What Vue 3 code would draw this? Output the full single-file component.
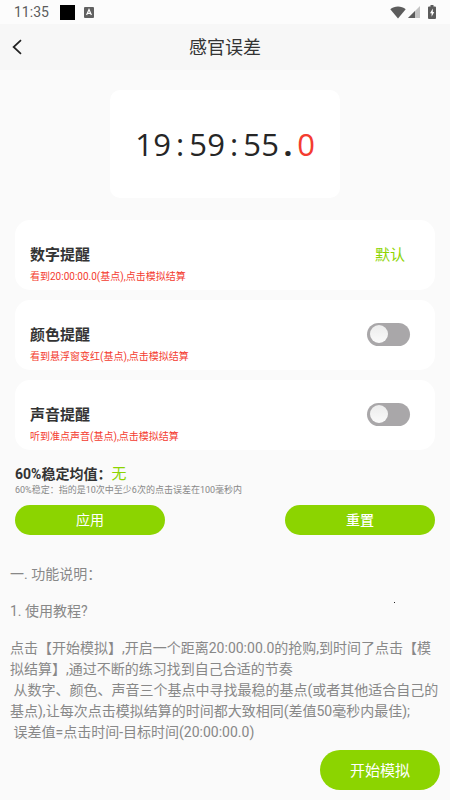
<script setup>
import { ref } from 'vue'

const time = '19:59:55.'
const tenth = '0'
const colorOn = ref(false)
const soundOn = ref(false)
const steps = [
  '点击【开始模拟】,开启一个距离20:00:00.0的抢购,到时间了点击【模拟结算】,通过不断的练习找到自己合适的节奏',
  ' 从数字、颜色、声音三个基点中寻找最稳的基点(或者其他适合自己的基点),让每次点击模拟结算的时间都大致相同(差值50毫秒内最佳);',
  ' 误差值=点击时间-目标时间(20:00:00.0)'
].join('\n')
</script>

<template>
  <div class="screen">
    <div class="status">
      <span class="status-time">11:35</span>
      <span class="block"></span>
      <svg class="ime" viewBox="0 0 10 11" aria-hidden="true">
        <rect width="10" height="11" rx="1" fill="#616161" />
        <path d="M2.6 8 5 2.6 7.4 8M3.5 6.4h3" fill="none" stroke="#fff" stroke-width="1.2" />
      </svg>
      <span class="grow"></span>
      <svg class="wifi" viewBox="0 0 16 13" aria-hidden="true">
        <path d="M8 12.6 0.3 3.2C4.6-.4 11.4-.4 15.7 3.2Z" fill="#5c5c5c" />
      </svg>
      <svg class="signal" viewBox="0 0 12 12" aria-hidden="true">
        <path d="M12 0v12H0Z" fill="#c4c4c4" />
        <path d="M7 5v7H0Z" fill="#5c5c5c" />
      </svg>
      <svg class="battery" viewBox="0 0 8 14" aria-hidden="true">
        <path d="M2.5 0h3v1.5H7a1 1 0 0 1 1 1V13a1 1 0 0 1-1 1H1a1 1 0 0 1-1-1V2.5a1 1 0 0 1 1-1h1.5Z" fill="#5c5c5c" />
        <path d="M4.8 3.5 2 8.2h1.6v3.6L6.2 7H4.8Z" fill="#fff" />
      </svg>
    </div>

    <header class="bar">
      <button class="back" type="button" aria-label="返回">
        <svg viewBox="0 0 10 16" aria-hidden="true">
          <path d="M9 1.2 1.6 8 9 14.8" fill="none" stroke="#222" stroke-width="1.7" />
        </svg>
      </button>
      <h1>感官误差</h1>
    </header>

    <main>
      <div class="clock">
        <span v-for="(c, i) in time" :key="i" class="cell" :class="{ point: c === '.' }">{{ c }}</span>
        <span class="cell tenth">{{ tenth }}</span>
      </div>

      <section class="cards">
        <div class="card">
          <div class="info">
            <h2>数字提醒</h2>
            <p>看到20:00:00.0(基点),点击模拟结算</p>
          </div>
          <button class="mode" type="button">默认</button>
        </div>
        <div class="card">
          <div class="info">
            <h2><label for="color-switch">颜色提醒</label></h2>
            <p>看到悬浮窗变红(基点),点击模拟结算</p>
          </div>
          <input id="color-switch" v-model="colorOn" class="switch" type="checkbox" role="switch" />
        </div>
        <div class="card">
          <div class="info">
            <h2><label for="sound-switch">声音提醒</label></h2>
            <p>听到准点声音(基点),点击模拟结算</p>
          </div>
          <input id="sound-switch" v-model="soundOn" class="switch" type="checkbox" role="switch" />
        </div>
      </section>

      <section class="stats">
        <div class="average"><strong>60%稳定均值：</strong><span>无</span></div>
        <p class="hint">60%稳定：指的是10次中至少6次的点击误差在100毫秒内</p>
        <div class="actions">
          <button class="pill" type="button">应用</button>
          <button class="pill reset" type="button">重置</button>
        </div>
      </section>

      <article class="guide">
        <p>一. 功能说明：</p>
        <p>1. 使用教程?</p>
        <p class="steps">{{ steps }}</p>
        <i class="speck"></i>
      </article>
    </main>

    <button class="start" type="button">开始模拟</button>
  </div>
</template>

<style>
body {
  background: #fafafa;
}
</style>

<style scoped>
.screen {
  min-height: 100vh;
  background: #fafafa;
  color: #333;
  font-family: Roboto, "Noto Sans CJK SC", sans-serif;
}
h1, h2, p {
  margin: 0;
}
button {
  border: 0;
  padding: 0;
  background: none;
  font-family: inherit;
  cursor: pointer;
}
.status {
  display: flex;
  align-items: center;
  height: 24px;
  padding: 0 14px;
  background: #fcfcfc;
}
.status-time {
  font-size: 14px;
  line-height: 24px;
  color: #5c5c5c;
}
.block {
  width: 15px;
  height: 15px;
  margin-left: 11px;
  background: #000;
}
.ime {
  width: 10px;
  height: 11px;
  margin-left: 9px;
}
.grow {
  flex: 1;
}
.wifi {
  width: 16px;
  height: 13px;
}
.signal {
  width: 12px;
  height: 12px;
  margin-left: 2px;
}
.battery {
  width: 8px;
  height: 14px;
  margin-left: 8px;
}
.bar {
  display: grid;
  grid-template-columns: 40px 1fr 40px;
  align-items: start;
  height: 46px;
  background: #f7f7f7;
}
.back {
  display: flex;
  align-items: center;
  height: 46px;
  padding-left: 12px;
}
.back svg {
  width: 10px;
  height: 16px;
}
h1 {
  font-size: 18px;
  font-weight: 400;
  line-height: 48px;
  text-align: center;
}
.clock {
  display: flex;
  justify-content: center;
  width: fit-content;
  margin: 20px auto 0;
  padding: 34px 25px;
  border-radius: 10px;
  background: #fff;
  color: #262626;
  font-family: "Open Sans", "Noto Sans", sans-serif;
  font-size: 31px;
  line-height: 40px;
}
.cell {
  width: 18px;
  text-align: center;
}
.point {
  font-weight: 700;
}
.tenth {
  color: #f43c30;
}
.cards {
  display: grid;
  gap: 10px;
  padding: 22px 15px 0;
}
.card {
  display: flex;
  align-items: center;
  justify-content: space-between;
  height: 70px;
  padding: 0 25px 0 15px;
  border-radius: 15px;
  background: #fff;
}
.info {
  padding-top: 22px;
}
h2 {
  font-size: 15px;
  font-weight: 700;
  line-height: 22px;
}
.info p {
  font-size: 10px;
  line-height: 22px;
  color: #f43c30;
}
.mode {
  padding: 0 5px;
  font-size: 15px;
  line-height: 24px;
  color: #8cd400;
}
.switch {
  appearance: none;
  display: flex;
  align-items: center;
  width: 43px;
  height: 23px;
  margin: 0 0 2px;
  padding: 0 3px;
  border-radius: 12px;
  background: #a9a7a9;
}
.switch::before {
  content: "";
  width: 18px;
  height: 18px;
  border-radius: 50%;
  background: linear-gradient(#ececec, #fafafa);
}
.switch:checked {
  justify-content: flex-end;
  background: #8cd400;
}
.stats {
  padding: 14px 15px 0;
}
.average {
  display: flex;
  align-items: center;
  font-size: 14px;
  line-height: 20px;
}
.average span {
  font-size: 15px;
  color: #8cd400;
}
.hint {
  font-size: 9px;
  line-height: 12px;
  color: #888;
}
.actions {
  display: flex;
  justify-content: space-between;
  padding-top: 9px;
}
.pill {
  width: 150px;
  height: 30px;
  padding-bottom: 2px;
  border-radius: 15px;
  background: #8cd400;
  color: #fff;
  font-size: 14px;
}
.reset {
  font-weight: 500;
}
.guide {
  position: relative;
  display: grid;
  gap: 16px;
  padding: 29px 10px 0;
  font-size: 14px;
  line-height: 21px;
  color: #888;
}
.steps {
  white-space: pre-wrap;
}
.speck {
  position: absolute;
  top: 67px;
  right: 55px;
  width: 1px;
  height: 1px;
  background: #222;
}
.start {
  position: fixed;
  right: 10px;
  bottom: 10px;
  width: 120px;
  height: 40px;
  padding-bottom: 2px;
  border-radius: 20px;
  background: #8cd400;
  color: #fff;
  font-size: 15px;
}
</style>
